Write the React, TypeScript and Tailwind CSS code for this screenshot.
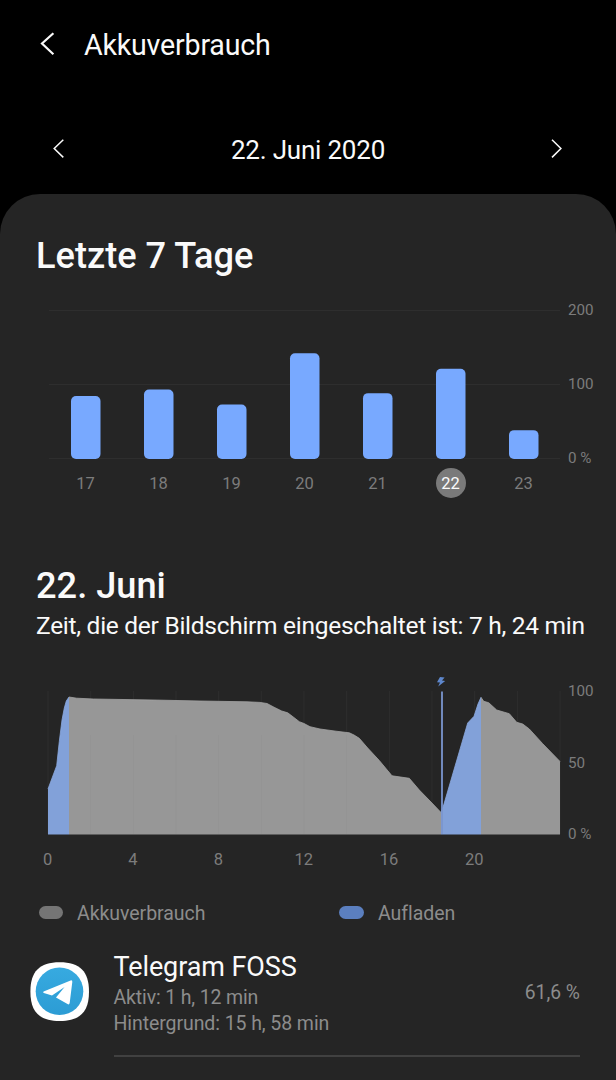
const days = [
  { day: 17, value: 85 },
  { day: 18, value: 94 },
  { day: 19, value: 73.5 },
  { day: 20, value: 143 },
  { day: 21, value: 89 },
  { day: 22, value: 122 },
  { day: 23, value: 39 },
];

const SELECTED_DAY = 22;

const hours = [0, 4, 8, 12, 16, 20];

// [x, y] in chart pixels, the plot is 512 wide (24h) and 143 high (100%)
const chargeMorning = [
  [0, 98], [8.7, 74.7], [11.3, 50.5], [14, 29], [16.3, 17], [18.3, 10], [21, 6],
];
const drainDay = [
  [21, 6], [28.7, 7.2], [45.3, 8], [105, 9], [152, 10], [199, 10.8], [212, 11.4],
  [219, 12.5], [226, 16.2], [233.7, 20], [239.7, 21.8], [245.3, 26], [251.3, 30.7],
  [256, 32.5], [262, 35.7], [272, 38], [288, 40.2], [301.3, 41.8], [306, 44], [311.3, 47.3],
  [319.7, 57], [331.3, 69.5], [344, 84.8], [361.3, 87.3], [371.3, 99], [383, 111], [393, 121.5],
];
const chargeEvening = [
  [393, 121.5], [395.7, 114], [419.7, 32], [426, 25.3], [430, 13], [433, 6.3],
];
const drainNight = [
  [433, 6.3], [435.7, 10.3], [440.7, 11.7], [448.7, 19], [461.3, 22.7], [468.7, 31.3],
  [474.7, 33], [481.3, 38], [494.7, 52.7], [512, 70.5],
];

function toLine(points: number[][]) {
  return points.map(([x, y]) => `${x},${y}`).join(" ");
}

function Area({ points, fill, stroke }: { points: number[][]; fill: string; stroke: string }) {
  const first = points[0][0];
  const last = points[points.length - 1][0];
  return (
    <>
      <polygon points={`${first},143.6 ${toLine(points)} ${last},143.6`} fill={fill} />
      <polyline points={toLine(points)} fill="none" stroke={stroke} strokeWidth="0.8" />
    </>
  );
}

function Header() {
  return (
    <header className="h-[194px] pt-[20px]">
      <div className="flex h-12 items-center pl-[40px]">
        <svg width="16" height="24" viewBox="0 0 16 24" fill="none" stroke="#fafafa" strokeWidth="2.2">
          <path d="M13.4 1.2 L2 11.5 L13.4 22.2" />
        </svg>
        <h1 className="ml-[28px] pt-[2px] text-[28.6px] leading-[48px] tracking-[-0.2px]">Akkuverbrauch</h1>
      </div>
      <div className="mt-[57px] flex h-12 items-center justify-between pl-[52px] pr-[52px]">
        <svg width="14" height="20" viewBox="0 0 14 20" fill="none" stroke="#fafafa" strokeWidth="1.5">
          <path d="M11.3 0.8 L2.2 9.5 L11.3 18.4" />
        </svg>
        <span className="pt-[2px] text-[26px] tracking-[-0.2px]">22. Juni 2020</span>
        <svg width="14" height="20" viewBox="0 0 14 20" fill="none" stroke="#fafafa" strokeWidth="1.5">
          <path d="M2 0.8 L10.9 9.5 L2 18.4" />
        </svg>
      </div>
    </header>
  );
}

function WeekChart() {
  return (
    <div className="mt-[24px]">
      <div className="flex h-[164px]">
        <svg className="ml-[49px] mt-[8px] shrink-0" width="511" height="150" viewBox="0 0 511 150">
          {[0.5, 74.5, 148.5].map((y) => (
            <line key={y} x1="0" x2="511" y1={y} y2={y} stroke="#2e2e2e" />
          ))}
          {days.map(({ day, value }, i) => (
            <rect
              key={day}
              x={22 + i * 73}
              y={149 - value * 0.74}
              width="29.5"
              height={value * 0.74}
              rx="5"
              fill="#78a9ff"
            />
          ))}
        </svg>
        <div className="ml-[8px] flex flex-col justify-between text-[15.2px] leading-4 text-[#7c7c7c]">
          <span>200</span>
          <span>100</span>
          <span>0 %</span>
        </div>
      </div>
      <div className="ml-[49px] mt-[2px] grid w-[511px] grid-cols-7 justify-items-center text-[16.5px] text-[#7c7c7c]">
        {days.map(({ day }) => (
          <span
            key={day}
            className={
              day === SELECTED_DAY
                ? "flex size-[30px] items-center justify-center rounded-full bg-[#7a7a7a] pt-[2px] text-[#fafafa]"
                : "flex size-[30px] items-center justify-center pt-[2px]"
            }
          >
            {day}
          </span>
        ))}
      </div>
    </div>
  );
}

function DayChart() {
  return (
    <div className="mt-[42px]">
      <div className="flex h-[159px]">
        <svg className="ml-[48px] mt-[8px] shrink-0 overflow-visible" width="512" height="143" viewBox="0 0 512 143">
          {Array.from({ length: 13 }, (_, i) => (
            <line key={i} x1={i * 42.67} x2={i * 42.67} y1="0" y2="143" stroke="#2e2e2e" />
          ))}
          <Area points={drainDay} fill="#979797" stroke="#a3a3a3" />
          <Area points={drainNight} fill="#979797" stroke="#a3a3a3" />
          <Area points={chargeMorning} fill="#82a1d9" stroke="#8caae0" />
          <Area points={chargeEvening} fill="#82a1d9" stroke="#8caae0" />
          {/* faint hour marks seen through the drained area */}
          {[1, 2, 3, 4, 5, 6, 7].map((i) => (
            <line
              key={i}
              x1={i * 42.67}
              x2={i * 42.67}
              y1="44"
              y2="143"
              stroke="#000"
              strokeOpacity="0.02"
            />
          ))}
          <line x1="394" x2="394" y1="0.5" y2="143" stroke="#7b96cf" strokeWidth="1.8" />
          <path d="M392 -14 L389 -8.8 L392 -8.6 L390.2 -4.4 L397.2 -10 L394 -10.4 L396.6 -13.6 Z" fill="#5e87cc" />
        </svg>
        <div className="ml-[8px] flex flex-col justify-between text-[15.2px] leading-4 text-[#7c7c7c]">
          <span>100</span>
          <span>50</span>
          <span>0 %</span>
        </div>
      </div>
      <div className="ml-[5px] mt-[7px] grid w-[512px] grid-cols-6 text-center text-[16.5px] leading-[22px] text-[#7c7c7c]">
        {hours.map((hour) => (
          <span key={hour}>{hour}</span>
        ))}
      </div>
    </div>
  );
}

function Legend() {
  return (
    <div className="mt-[31px] flex h-6 items-center text-[19.5px] tracking-[-0.05px] text-[#8c8c8c]">
      <div className="ml-[38px] flex w-[301px] items-center">
        <span className="mb-[3px] mr-[14px] ml-px h-[13px] w-[24px] rounded-full bg-[#757575]" />
        Akkuverbrauch
      </div>
      <div className="flex items-center">
        <span className="mb-[3px] mr-[14px] h-[13px] w-[25px] rounded-full bg-[#5b7fbf]" />
        Aufladen
      </div>
    </div>
  );
}

function TelegramIcon() {
  return (
    <svg width="60" height="60" viewBox="0 0 60 60">
      <defs>
        <linearGradient id="telegram" x1="0" y1="0" x2="0" y2="1">
          <stop offset="0" stopColor="#37aae0" />
          <stop offset="1" stopColor="#2c9cd4" />
        </linearGradient>
      </defs>
      <path
        d="M29.7 0.3 C50 0.3 59 9.5 59 29.7 C59 49.8 50 59 29.7 59 C9.4 59 0.4 49.8 0.4 29.7 C0.4 9.5 9.4 0.3 29.7 0.3 Z"
        fill="#fff"
      />
      <circle cx="29.5" cy="29.3" r="23.8" fill="url(#telegram)" />
      <path
        d="M13.6 29.4 L40.6 18.5 Q42.5 17.9 42.3 20 L39.7 41 Q39.2 43 37.5 42.1 L26 35.6 L34.6 25 L22 33.4 L13.8 31 Q12.5 30.2 13.6 29.4 Z"
        fill="#fff"
      />
    </svg>
  );
}

function AppRow() {
  return (
    <div className="mt-[26px] flex pl-[30px]">
      <div className="mt-[10px] w-[83.5px] shrink-0">
        <TelegramIcon />
      </div>
      <div className="flex h-[105px] w-[466.5px] items-start justify-between border-b-2 border-[#414141]">
        <div className="whitespace-nowrap">
          <p className="text-[27px] leading-[30px] tracking-[-0.1px]">Telegram FOSS</p>
          <p className="mt-[2px] text-[19.5px] leading-[27px] tracking-[-0.15px] text-[#8c8c8c]">Aktiv: 1 h, 12 min</p>
          <p className="text-[19.5px] leading-[26px] tracking-[-0.08px] text-[#8c8c8c]">Hintergrund: 15 h, 58 min</p>
        </div>
        <span className="mt-[28px] text-[19.3px] leading-[26px] text-[#8c8c8c]">61,6 %</span>
      </div>
    </div>
  );
}

export default function App() {
  return (
    <div className="h-[1080px] w-[616px] overflow-hidden bg-black font-['Roboto',sans-serif] text-[#fafafa]">
      <Header />
      <main className="h-[886px] rounded-t-[40px] bg-[#252525] pt-[40px]">
        <h2 className="pl-[36px] text-[36.2px] leading-[44px] font-medium">Letzte 7 Tage</h2>
        <WeekChart />
        <h2 className="mt-[66px] pl-[36px] text-[36.2px] leading-[44px] font-medium">22. Juni</h2>
        <p className="mt-[3px] pl-[36px] text-[24.5px] leading-[30px] tracking-[-0.28px] whitespace-nowrap">
          Zeit, die der Bildschirm eingeschaltet ist: 7 h, 24 min
        </p>
        <DayChart />
        <Legend />
        <AppRow />
      </main>
    </div>
  );
}
